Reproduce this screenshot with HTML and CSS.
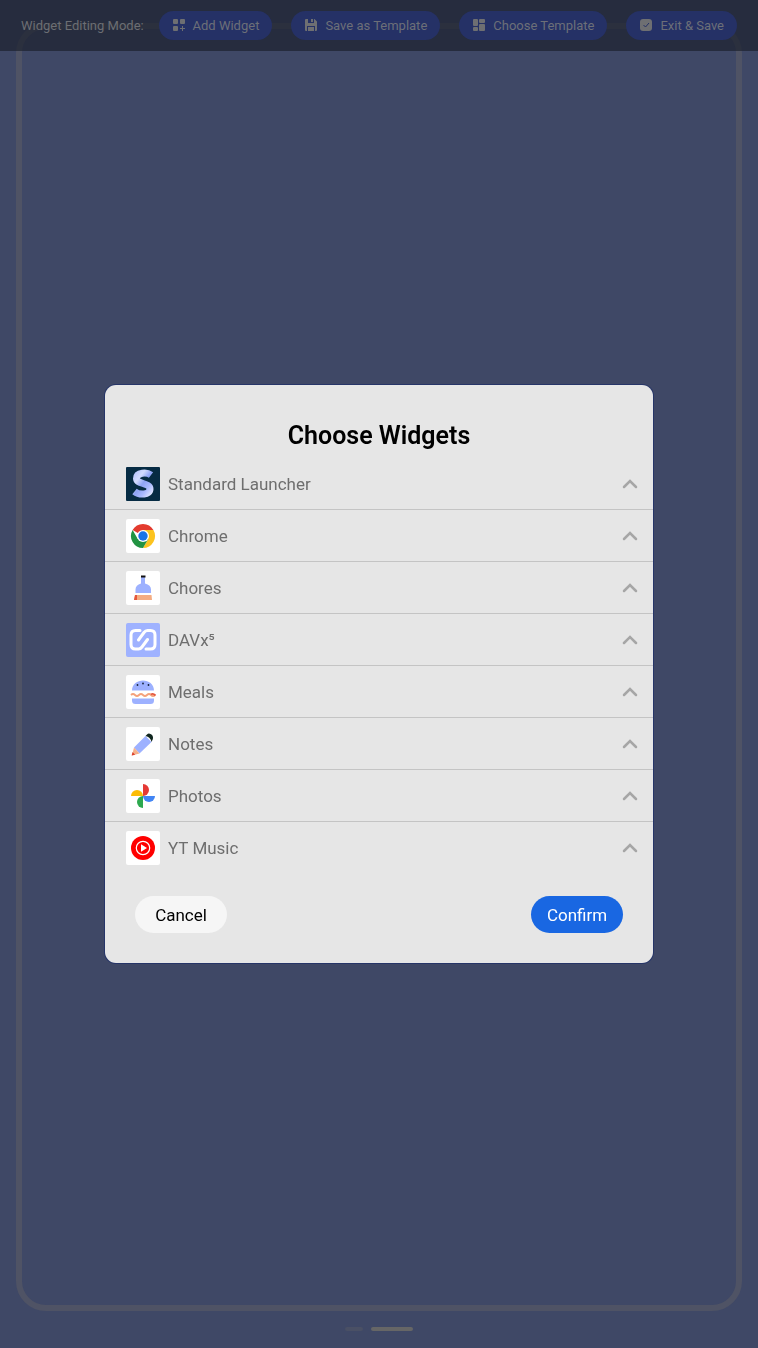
FILE: index.html
```html
<!DOCTYPE html>
<html lang="en">
<head>
    <meta charset="UTF-8">
    <meta name="viewport" content="width=device-width, initial-scale=1.0">
    <title>Choose Widgets</title>
    <link rel="stylesheet" href="styles.css">
</head>
<body>
    <div class="home">
        <div class="frame"></div>
        <div class="pager">
            <span class="page"></span>
            <span class="page active"></span>
        </div>
    </div>

    <header class="toolbar">
        <span>Widget Editing Mode:</span>
        <div class="tools">
            <button type="button" class="tool">
                <svg viewBox="0 0 14 14"><rect x="1" width="5" height="5" rx="1"/><rect x="8" width="5" height="5" rx="1"/><rect x="1" y="7" width="5" height="5" rx="1"/><path d="M10 7h1v2h2v1h-2v2h-1v-2H8V9h2z"/></svg>
                Add Widget
            </button>
            <button type="button" class="tool">
                <svg viewBox="0 0 14 14"><path fill-rule="evenodd" d="M2 0h8.500L13 2.500V11q0 1-1 1h-1V7H3v5H2q-1 0-1-1V1q0-1 1-1zM4 0v4h6V0H9v3H7V0z"/><path d="M4 8h6v4H4z"/></svg>
                Save as Template
            </button>
            <button type="button" class="tool">
                <svg viewBox="0 0 14 14"><rect x="1" width="5" height="7" rx="1"/><rect x="7" width="6" height="4" rx="1"/><rect x="1" y="8" width="5" height="4" rx="1"/><rect x="7" y="5" width="6" height="7" rx="1"/></svg>
                Choose Template
            </button>
            <button type="button" class="tool">
                <svg viewBox="0 0 14 14"><rect x="1" width="12" height="12" rx="3"/><path class="tick" d="M4.500 6l2 2 3.500-4"/></svg>
                Exit &amp; Save
            </button>
        </div>
    </header>

    <div class="overlay">
        <div class="dialog" role="dialog" aria-labelledby="dialog-title">
            <h1 id="dialog-title">Choose Widgets</h1>
            <ul class="apps">
                <li><button type="button" class="app">
                    <svg class="icon" viewBox="0 0 34 34">
                        <defs><linearGradient id="s-fill" x1="0" y1="0" x2="1" y2="1"><stop offset="0" stop-color="#b9c6ff"/><stop offset=".25" stop-color="#d2dbff"/><stop offset=".5" stop-color="#8ea3f5"/><stop offset=".75" stop-color="#a9b9ff"/><stop offset="1" stop-color="#dce2ff"/></linearGradient></defs>
                        <rect width="34" height="34" rx="1" fill="#062b43"/>
                        <path d="M25 8C21 5 10.500 5 10.500 11.500C10.500 17.500 24 15.500 24 22C24 28 13.500 28.500 8.500 24.500" fill="none" stroke="url(#s-fill)" stroke-width="7"/>
                    </svg>
                    <span>Standard Launcher</span>
                    <svg class="chevron" viewBox="0 0 16 10"><path d="M2 8l6-6 6 6"/></svg>
                </button></li>
                <li><button type="button" class="app">
                    <svg class="icon" viewBox="0 0 34 34">
                        <rect width="34" height="34" rx="2" fill="#fff"/>
                        <path d="M17 17L6.600 11A12 12 0 0 1 27.400 11z" fill="#e33b2e"/>
                        <path d="M17 11h10.400A12 12 0 0 1 17 29l5.200-9z" fill="#fcc31e"/>
                        <path d="M6.600 11A12 12 0 0 0 17 29l5.200-9L11.800 20z" fill="#229342"/>
                        <circle cx="17" cy="17" r="6" fill="#fff"/>
                        <circle cx="17" cy="17" r="4.700" fill="#1a73e8"/>
                    </svg>
                    <span>Chrome</span>
                    <svg class="chevron" viewBox="0 0 16 10"><path d="M2 8l6-6 6 6"/></svg>
                </button></li>
                <li><button type="button" class="app">
                    <svg class="icon" viewBox="0 0 34 34">
                        <rect width="34" height="34" rx="2" fill="#fff"/>
                        <path d="M15 6h4v6.500c4 1 6 3 6 6V22H9.500v-3.500c0-3 2-5 5.500-6z" fill="#9db1ff"/>
                        <path d="M15 4.500h4.500v2H15z" fill="#111"/>
                        <path d="M9 24h16.500l.5 5H8z" fill="#f4ac82"/>
                        <path d="M9 24h2v5H8z" fill="#e4573d"/>
                    </svg>
                    <span>Chores</span>
                    <svg class="chevron" viewBox="0 0 16 10"><path d="M2 8l6-6 6 6"/></svg>
                </button></li>
                <li><button type="button" class="app">
                    <svg class="icon" viewBox="0 0 34 34">
                        <rect width="34" height="34" rx="2" fill="#9fb2ff"/>
                        <g fill="none" stroke="#fff" stroke-width="3" stroke-linecap="round" stroke-linejoin="round">
                            <path d="M14 7.500H9.500Q5 7.500 5 12v9.500Q5 26 9.500 26h3q2 0 3.500-2l5.500-7.500"/>
                            <path d="M20 26h4.500Q29 26 29 21.500V12q0-4.500-4.500-4.500h-3q-2 0-3.500 2L12.500 17"/>
                        </g>
                    </svg>
                    <span>DAVx⁵</span>
                    <svg class="chevron" viewBox="0 0 16 10"><path d="M2 8l6-6 6 6"/></svg>
                </button></li>
                <li><button type="button" class="app">
                    <svg class="icon" viewBox="0 0 34 34">
                        <rect width="34" height="34" rx="2" fill="#fff"/>
                        <path d="M6 15.500C6 2 28 2 28 15.500zM6 23.500h22v2q0 3.500-3.500 3.500h-15Q6 29 6 25.500z" fill="#9db1ff"/>
                        <g fill="#152238"><circle cx="11.500" cy="10" r=".9"/><circle cx="17" cy="8.500" r=".9"/><circle cx="22.500" cy="10" r=".9"/></g>
                        <path d="M5 20q2-2 4 0t4 0 4 0 4 0 4 0 4 0" fill="none" stroke="#f4a27c" stroke-width="1.800"/>
                        <path d="M25 19.500q2-1.500 4.500 1" fill="none" stroke="#e4573d" stroke-width="1.800"/>
                    </svg>
                    <span>Meals</span>
                    <svg class="chevron" viewBox="0 0 16 10"><path d="M2 8l6-6 6 6"/></svg>
                </button></li>
                <li><button type="button" class="app">
                    <svg class="icon" viewBox="0 0 34 34">
                        <rect width="34" height="34" rx="2" fill="#fff"/>
                        <path d="M8 20.500L19.500 9l6 6L13.500 26.500z" fill="#9db1ff"/>
                        <path d="M19.500 9l1.500-1.500q1.500-1.500 3.500-.5 2 .5 2.500 3 .5 2-1.500 5-1-5-6-6z" fill="#10261f"/>
                        <path d="M8 20.500l5.500 6-7.500 2z" fill="#f5b08a"/>
                        <path d="M6.600 25l2.500 2.700-3.500.8z" fill="#dc432d"/>
                    </svg>
                    <span>Notes</span>
                    <svg class="chevron" viewBox="0 0 16 10"><path d="M2 8l6-6 6 6"/></svg>
                </button></li>
                <li><button type="button" class="app">
                    <svg class="icon" viewBox="0 0 34 34">
                        <rect width="34" height="34" rx="2" fill="#fff"/>
                        <path d="M17 5a6 6 0 0 1 0 12z" fill="#e53935"/>
                        <path d="M29 17a6 6 0 0 1-12 0z" fill="#4285f4"/>
                        <path d="M17 29a6 6 0 0 1 0-12z" fill="#2da94f"/>
                        <path d="M5 17a6 6 0 0 1 12 0z" fill="#fbbc04"/>
                    </svg>
                    <span>Photos</span>
                    <svg class="chevron" viewBox="0 0 16 10"><path d="M2 8l6-6 6 6"/></svg>
                </button></li>
                <li><button type="button" class="app">
                    <svg class="icon" viewBox="0 0 34 34">
                        <rect width="34" height="34" rx="2" fill="#fff"/>
                        <circle cx="17" cy="17" r="12" fill="#f00"/>
                        <circle cx="17" cy="17" r="6.700" fill="none" stroke="#fff" stroke-width="1.200"/>
                        <path d="M15 13.300l6 3.700-6 3.700z" fill="#fff"/>
                    </svg>
                    <span>YT Music</span>
                    <svg class="chevron" viewBox="0 0 16 10"><path d="M2 8l6-6 6 6"/></svg>
                </button></li>
            </ul>
            <div class="actions">
                <button type="button" class="cancel">Cancel</button>
                <button type="button" class="confirm">Confirm</button>
            </div>
        </div>
    </div>
</body>
</html>
```
FILE: styles.css
```css
* {
    box-sizing: border-box;
}

body {
    margin: 0;
    font-family: Roboto, "Liberation Sans", sans-serif;
    background-color: #3f4866;
}

button {
    border: none;
    font-family: inherit;
    cursor: pointer;
}

.home {
    display: flex;
    flex-direction: column;
    min-height: 100vh;
    padding: 23px 16px 17px;
}

.frame {
    flex: 1;
    border: 6px solid #4f5365;
    border-radius: 30px;
}

.pager {
    display: flex;
    justify-content: center;
    gap: 8px;
    padding-top: 16px;
}

.page {
    width: 18px;
    height: 4px;
    border-radius: 2px;
    background-color: #4a5065;
}

.page.active {
    width: 42px;
    background-color: #666666;
}

/* bar on top of the home screen, the frame shows through it */
.toolbar {
    position: absolute;
    top: 0;
    left: 0;
    right: 0;
    display: flex;
    justify-content: space-between;
    align-items: center;
    height: 51px;
    padding: 0 21px;
    background-color: rgba(25, 29, 42, 0.65);
    color: #6c6e73;
    font-size: 13px;
    white-space: nowrap;
}

.tools {
    display: flex;
    gap: 19px;
}

.tool {
    display: flex;
    align-items: center;
    gap: 7px;
    height: 29px;
    padding: 0 13px;
    border-radius: 15px;
    background-color: #253166;
    color: #6c6f78;
    font-size: 13px;
}

.tool svg {
    width: 14px;
    height: 14px;
    fill: #6e6f72;
}

.tool .tick {
    fill: none;
    stroke: #253166;
}

.overlay {
    position: fixed;
    inset: 0;
    display: flex;
    justify-content: center;
    align-items: center;
}

.dialog {
    width: calc(100% - 210px);
    max-width: 640px;
    padding: 36px 0 30px;
    border-radius: 11px;
    background-color: #e6e6e6;
    box-shadow: 0 0 0 1px #263568;
}

h1 {
    margin: 0 0 7px;
    font-size: 25px;
    font-weight: 600;
    line-height: 30px;
    text-align: center;
    color: #000;
}

.apps {
    margin: 0;
    padding: 0;
    list-style: none;
}

.apps li + li {
    border-top: 1px solid #c4c4c4;
}

.app {
    display: flex;
    align-items: center;
    gap: 8px;
    width: 100%;
    height: 51px;
    padding: 0 15px 0 21px;
    background: none;
    color: #6e6e6e;
    font-size: 17px;
    text-align: left;
}

.app span {
    flex: 1;
}

.icon {
    width: 34px;
    height: 34px;
}

.chevron {
    width: 16px;
    height: 10px;
    fill: none;
    stroke: #a6a6a6;
    stroke-width: 2.5;
    stroke-linecap: round;
}

.actions {
    display: flex;
    justify-content: space-between;
    padding: 23px 30px 0;
}

.actions button {
    width: 92px;
    height: 37px;
    padding: 0;
    border-radius: 19px;
    font-size: 17px;
}

.cancel {
    background-color: #f6f6f6;
    color: #000;
}

.confirm {
    background-color: #1967e2;
    color: #fff;
}
```
